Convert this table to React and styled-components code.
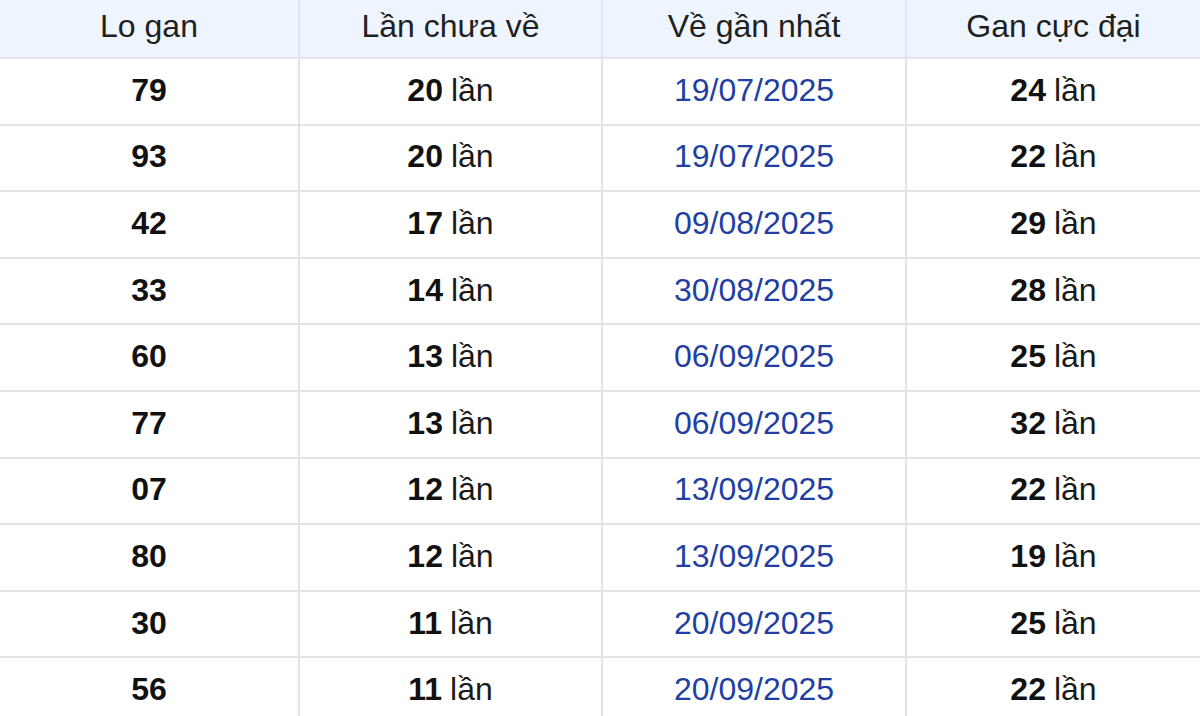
import React from "react";
import styled, { createGlobalStyle } from "styled-components";

const Global = createGlobalStyle`
  html, body { margin: 0; padding: 0; background: #fff; overflow: hidden; }
  body { font-family: "Liberation Sans", Arial, sans-serif; }
`;

const Grid = styled.div`
  display: grid;
  grid-template-columns: 298px 303px 304px 1fr;
  width: 1200px;
`;

const HeadCell = styled.div`
  height: 59px;
  box-sizing: border-box;
  display: flex;
  align-items: center;
  justify-content: center;
  background: #eef5fe;
  border-bottom: 2px solid #e2e6ec;
  border-left: ${(p) => (p.$first ? "none" : "2px solid #e2e6ec")};
  font-size: 32px;
  color: #1f1f1f;
  padding-bottom: 4px;
`;

const Cell = styled.div`
  height: 66.6px;
  box-sizing: border-box;
  display: flex;
  align-items: center;
  justify-content: center;
  border-bottom: 2px solid #e4e4e4;
  border-left: ${(p) => (p.$first ? "none" : "2px solid #e4e4e4")};
  font-size: 32px;
  color: ${(p) => (p.$date ? "#1f3fa3" : "#111")};
  font-weight: ${(p) => (p.$bold ? 700 : 400)};
  padding-bottom: 2px;
`;

const Num = styled.b`
  font-weight: 700;
  margin-right: 8px;
  color: #111;
`;

const Word = styled.span`
  color: #1a1a1a;
`;

const rows = [
  ["79", "20", "19/07/2025", "24"],
  ["93", "20", "19/07/2025", "22"],
  ["42", "17", "09/08/2025", "29"],
  ["33", "14", "30/08/2025", "28"],
  ["60", "13", "06/09/2025", "25"],
  ["77", "13", "06/09/2025", "32"],
  ["07", "12", "13/09/2025", "22"],
  ["80", "12", "13/09/2025", "19"],
  ["30", "11", "20/09/2025", "25"],
  ["56", "11", "20/09/2025", "22"],
];

const headers = ["Lo gan", "Lần chưa về", "Về gần nhất", "Gan cực đại"];

export default function App() {
  return (
    <>
      <Global />
      <Grid>
        {headers.map((h, i) => (
          <HeadCell key={h} $first={i === 0}>
            {h}
          </HeadCell>
        ))}
        {rows.map((r) => (
          <React.Fragment key={r[0]}>
            <Cell $first $bold>
              {r[0]}
            </Cell>
            <Cell>
              <Num>{r[1]}</Num>
              <Word>lần</Word>
            </Cell>
            <Cell $date>{r[2]}</Cell>
            <Cell>
              <Num>{r[3]}</Num>
              <Word>lần</Word>
            </Cell>
          </React.Fragment>
        ))}
      </Grid>
    </>
  );
}
